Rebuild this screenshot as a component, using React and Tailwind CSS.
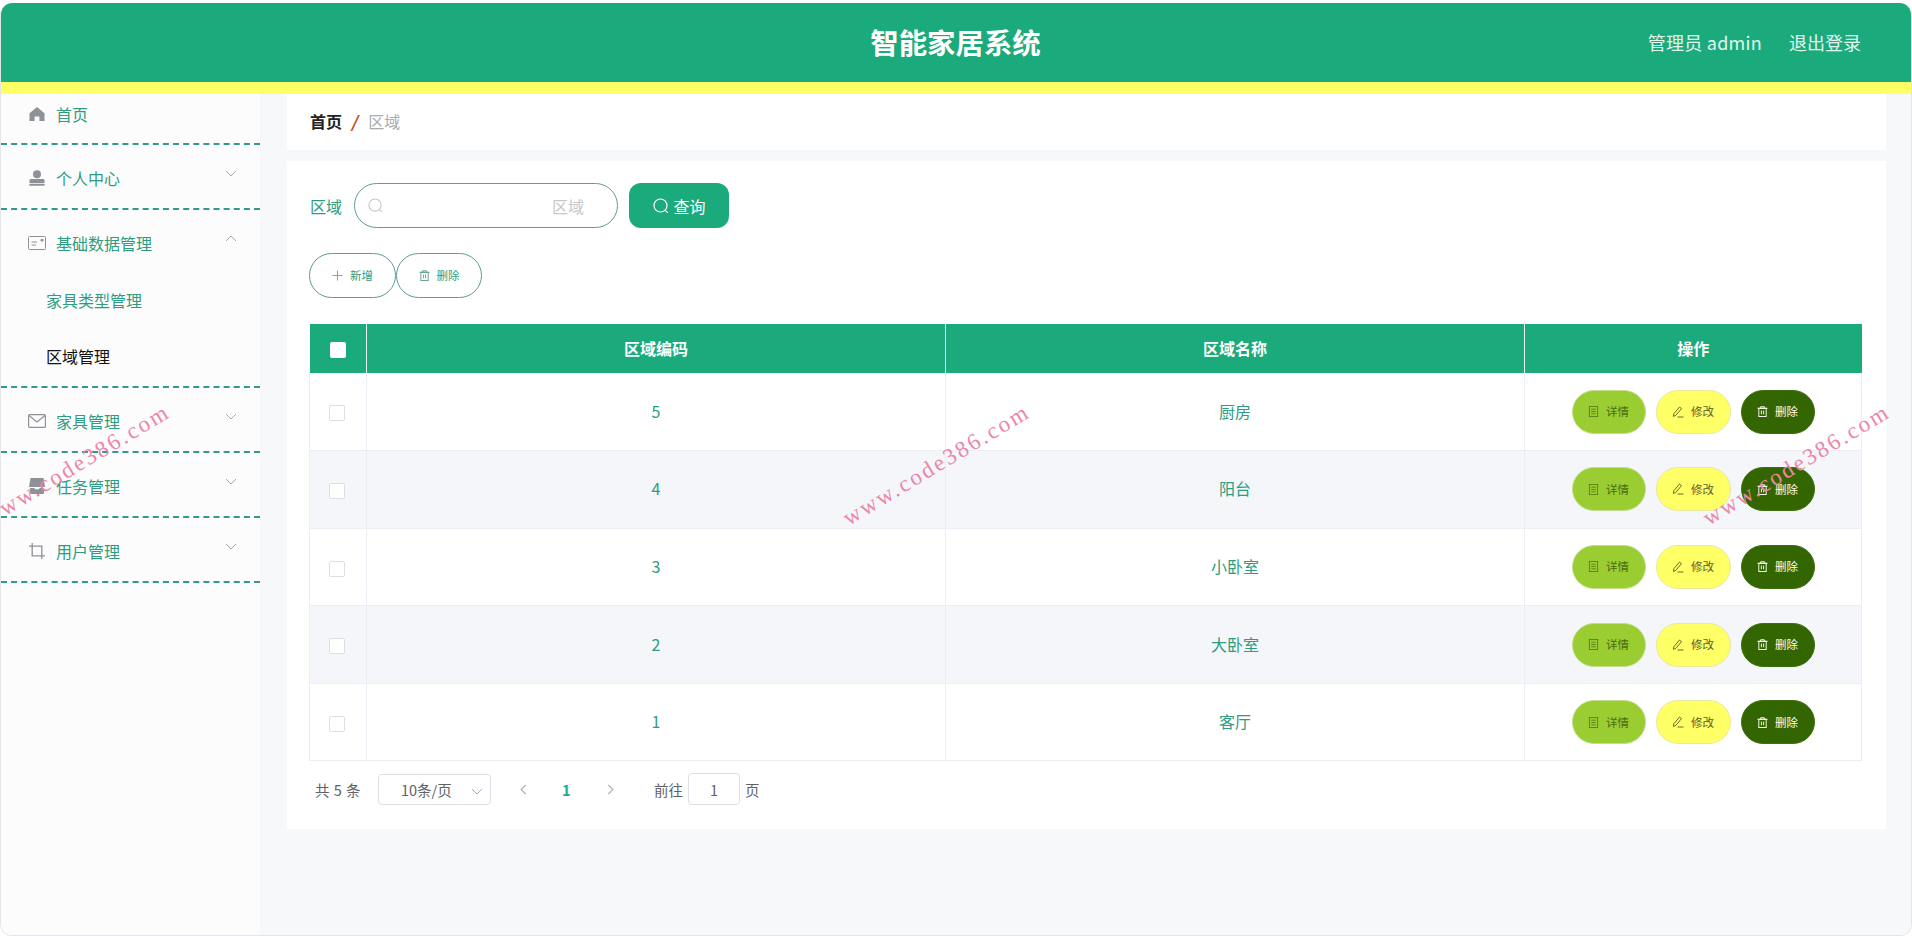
import React from "react";

const FONT = '"Noto Sans CJK SC", "Noto Sans", sans-serif';

const Home = () => (
  <svg viewBox="0 0 16 16" className="w-[16px] h-[16px]" fill="#8f9199">
    <path d="M8 1 L15.5 7.2 V15 H10.4 V10.4 H5.6 V15 H.5 V7.2 Z" />
  </svg>
);
const Person = () => (
  <svg viewBox="0 0 16 16" className="w-[16px] h-[16px]" fill="#8f9199">
    <circle cx="8" cy="4.2" r="4" />
    <path d="M.5 10.2 Q.5 9 2 9 H14 Q15.5 9 15.5 10.2 V13 H.5 Z" />
    <rect x=".5" y="13.8" width="15" height="2" rx=".4" />
  </svg>
);
const Postcard = () => (
  <svg viewBox="0 0 18 14" className="w-[18px] h-[14px]" fill="none" stroke="#8f9199" strokeWidth="1">
    <rect x=".5" y=".5" width="17" height="13" rx="1" />
    <path d="M3.5 6 H9 M3.5 9 H8" />
    <path d="M13 3.5 H15 V5 H13 Z" fill="#8f9199" />
  </svg>
);
const Message = () => (
  <svg viewBox="0 0 18 14" className="w-[18px] h-[14px]" fill="none" stroke="#8f9199" strokeWidth="1.2">
    <rect x=".6" y=".6" width="16.8" height="12.8" rx="1" />
    <path d="M1 1.5 L9 8 L17 1.5" />
  </svg>
);
const Box = () => (
  <svg viewBox="0 0 16 16" className="w-[16px] h-[16px]" fill="#8f9199">
    <path d="M1.5 0 H14.5 L16 9 H0 Z" />
    <path d="M1 10 H5 Q8 13 11 10 H15 V15 Q15 16 14 16 H2 Q1 16 1 15 Z" />
  </svg>
);
const Crop = () => (
  <svg viewBox="0 0 16 16" className="w-[16px] h-[16px]" fill="none" stroke="#8f9199" strokeWidth="1.3">
    <path d="M3.2 0 V12.8 H16" />
    <path d="M0 3.2 H12.8 V16" />
  </svg>
);
const Chev = ({ up }) => (
  <svg viewBox="0 0 12 7" className="w-[12px] h-[7px]" fill="none" stroke="#a9abb2" strokeWidth="1">
    <path d={up ? "M1 6 L6 1 L11 6" : "M1 1 L6 6 L11 1"} />
  </svg>
);
const Search = ({ color, size }) => (
  <svg viewBox="0 0 16 16" style={{ width: size, height: size }} fill="none" stroke={color} strokeWidth="1.2">
    <circle cx="7.5" cy="7.5" r="6.5" />
    <path d="M12.3 12.3 L14.8 14.8" />
  </svg>
);
const Plus = () => (
  <svg viewBox="0 0 12 12" className="w-[11px] h-[11px]" fill="none" stroke="#7e9c96" strokeWidth="1">
    <path d="M6 .5 V11.5 M.5 6 H11.5" />
  </svg>
);
const Trash = ({ color }) => (
  <svg viewBox="0 0 12 12" className="w-[11px] h-[11px]" fill="none" stroke={color} strokeWidth="1">
    <path d="M.5 2.5 H11.5 M4 2.5 V.8 H8 V2.5" />
    <rect x="2" y="2.5" width="8" height="9" />
    <path d="M4.8 5 V9 M7.2 5 V9" />
  </svg>
);
const Doc = ({ color }) => (
  <svg viewBox="0 0 12 12" className="w-[11px] h-[11px]" fill="none" stroke={color} strokeWidth="1">
    <rect x="1.5" y=".5" width="9" height="11" />
    <path d="M3.5 3.5 H8.5 M3.5 6 H8.5 M3.5 8.5 H8.5" />
  </svg>
);
const Pen = ({ color }) => (
  <svg viewBox="0 0 12 12" className="w-[12px] h-[12px]" fill="none" stroke={color} strokeWidth="1">
    <path d="M7.5 1 L9.5 2.6 L3.8 9.4 L1.4 10.4 L1.8 7.8 Z" />
    <path d="M5.5 11 H11.5" />
  </svg>
);

const menu = [
  { label: "个人中心", icon: <Person /> },
  { label: "基础数据管理", icon: <Postcard />, open: true },
  { label: "家具管理", icon: <Message /> },
  { label: "任务管理", icon: <Box /> },
  { label: "用户管理", icon: <Crop /> },
];

const MenuRow = ({ item }) => (
  <div className="h-[63px] flex items-center pl-[27px] pr-[23px] pt-[2px]">
    <span className="w-[18px] flex justify-center">{item.icon}</span>
    <span className="ml-[10px] text-[16px] text-[#2d9c80]">{item.label}</span>
    <span className="ml-auto -mt-[8px] flex"><Chev up={item.open} /></span>
  </div>
);

const Sidebar = () => (
  <aside className="w-[259px] shrink-0 bg-[#fcfcfd]">
    <div className="h-[51px] flex items-center pl-[27px] pb-[9px] border-b-2 border-dashed border-[#33998a]">
      <span className="w-[18px] flex justify-center"><Home /></span>
      <span className="ml-[10px] text-[16px] text-[#2d9c80]">首页</span>
    </div>
    {menu.map((item) => (
      <div key={item.label} className="border-b-2 border-dashed border-[#33998a]">
        <MenuRow item={item} />
        {item.open && (
          <div>
            <div className="h-[54px] flex items-center pl-[45px] text-[16px] text-[#2d9c80]">家具类型管理</div>
            <div className="h-[59px] flex items-center pl-[45px] pb-[2px] text-[16px] text-[#111111]">区域管理</div>
          </div>
        )}
      </div>
    ))}
  </aside>
);

const ActionBtn = ({ w, bg, border, color, icon, label }) => (
  <button className={`h-[44px] ${w} rounded-full flex items-center justify-center gap-[7px] text-[11.5px] border ${bg} ${border} ${color}`}>
    {icon}
    {label}
  </button>
);

const rows = [
  ["5", "厨房"],
  ["4", "阳台"],
  ["3", "小卧室"],
  ["2", "大卧室"],
  ["1", "客厅"],
];

const Table = () => (
  <table className="w-[1552px] table-fixed border-collapse mt-[26px]">
    <colgroup>
      <col className="w-[57px]" />
      <col className="w-[579px]" />
      <col className="w-[579px]" />
      <col className="w-[337px]" />
    </colgroup>
    <thead>
      <tr className="h-[49px] bg-[#1baa7b] text-white text-[16px] font-bold">
        <th className="border-r border-[#e8f5f0] pb-[2px]">
          <span className="inline-block w-[16px] h-[16px] bg-white rounded-[2px] align-middle" />
        </th>
        <th className="border-r border-[#e8f5f0] pb-[2px]">区域编码</th>
        <th className="border-r border-[#e8f5f0] pb-[2px]">区域名称</th>
        <th className="pb-[2px]">操作</th>
      </tr>
    </thead>
    <tbody>
      {rows.map((r, i) => (
        <tr key={r[0]} className={`h-[77.6px] text-[16px] text-[#2d9c80] border-b border-[#ebeef5] ${i % 2 ? "bg-[#f4f6fa]" : "bg-white"}`}>
          <td className="border-x border-[#ebeef5] text-center pb-[2px] pr-[3px]">
            <span className="inline-block w-[16px] h-[16px] bg-white border border-[#dcdfe6] rounded-[2px] align-middle" />
          </td>
          <td className="border-r border-[#ebeef5] text-center pb-[2px]">{r[0]}</td>
          <td className="border-r border-[#ebeef5] text-center pb-[2px]">{r[1]}</td>
          <td className="border-r border-[#ebeef5]">
            <div className="flex justify-center gap-[10px]">
              <ActionBtn w="w-[74px]" bg="bg-[#9acd32]" border="border-[#c3dd8c]" color="text-[#4d6b14]" icon={<Doc color="#5f7f1f" />} label="详情" />
              <ActionBtn w="w-[75px]" bg="bg-[#ffff66]" border="border-[#e8e8a0]" color="text-[#5c5c2e]" icon={<Pen color="#6b6b2a" />} label="修改" />
              <ActionBtn w="w-[74px]" bg="bg-[#336600]" border="border-[#3d7010]" color="text-white" icon={<Trash color="#ffffff" />} label="删除" />
            </div>
          </td>
        </tr>
      ))}
    </tbody>
  </table>
);

const Pager = () => (
  <div className="flex items-center h-[32px] mt-[12px] text-[14.5px] text-[#606266]">
    <span className="ml-[6px] w-[63px] tracking-[0.5px]">共 5 条</span>
    <div className="w-[113px] h-[31px] border border-[#dcdfe6] rounded-[4px] flex items-center relative pl-[22px]">
      <span>10条/页</span>
      <span className="absolute right-[7px] top-[13px] flex"><Chev /></span>
    </div>
    <svg viewBox="0 0 8 12" className="w-[8px] h-[11px] ml-[28px]" fill="none" stroke="#b8bac0" strokeWidth="1.6"><path d="M7 1 L2 6 L7 11" /></svg>
    <span className="ml-[35px] w-[8px] text-center font-bold text-[#1dab8d]">1</span>
    <svg viewBox="0 0 8 12" className="w-[8px] h-[11px] ml-[37px]" fill="none" stroke="#b8bac0" strokeWidth="1.6"><path d="M1 1 L6 6 L1 11" /></svg>
    <span className="ml-[39px]">前往</span>
    <div className="ml-[5px] w-[52px] h-[32px] border border-[#dcdfe6] rounded-[4px] flex items-center justify-center">1</div>
    <span className="ml-[5px]">页</span>
  </div>
);

const Main = () => (
  <main className="flex-1 min-w-0 bg-[#f6f8fa] pl-[27px] pr-[25px]">
    <div className="h-[56px] bg-white flex items-center px-[23px] pb-[2px] text-[16px]">
      <span className="font-bold text-[#222222]">首页</span>
      <span className="ml-[9px] mr-[11px] font-black italic text-[#c4572b]">/</span>
      <span className="text-[#a8abb2]">区域</span>
    </div>
    <div className="mt-[11px] h-[668px] bg-white pl-[22px] pt-[22px]">
      <div className="flex items-center h-[45px]">
        <span className="ml-[1px] text-[16px] text-[#2d9c80]">区域</span>
        <div className="ml-[12px] w-[264px] h-[45px] rounded-full border border-[#5e9c97] flex items-center pl-[13px]">
          <Search color="#c4c7cd" size={15} />
          <span className="ml-[169px] text-[16px] text-[#c6c8cd]">区域</span>
        </div>
        <button className="ml-[11px] w-[100px] h-[45px] rounded-[12px] bg-[#1baa7b] text-white text-[16px] flex items-center justify-center gap-[5px]">
          <Search color="#ffffff" size={16} />
          查询
        </button>
      </div>
      <div className="flex mt-[25px]">
        <button className="w-[87px] h-[45px] rounded-full border border-[#5e9c97] flex items-center justify-center gap-[7px] text-[11.5px] text-[#2d9c80]">
          <Plus />新增
        </button>
        <button className="w-[86px] h-[45px] rounded-full border border-[#5e9c97] flex items-center justify-center gap-[7px] text-[11.5px] text-[#2d9c80]">
          <Trash color="#5e9c8c" />删除
        </button>
      </div>
      <Table />
      <Pager />
    </div>
  </main>
);

const Watermark = ({ x }) => (
  <span
    className="absolute top-[448px] whitespace-nowrap text-[23px] tracking-[2.4px] text-[#ec86a8] -rotate-[31deg] pointer-events-none"
    style={{ left: x, fontFamily: '"Liberation Serif", serif' }}
  >
    www.code386.com
  </span>
);

export default function App() {
  return (
    <div className="relative w-[1912px] h-[936px] overflow-hidden bg-white pt-[3px]" style={{ fontFamily: FONT }}>
      <div className="h-full flex flex-col rounded-[12px] border-x border-b border-[#e3e5e8] overflow-hidden">
        <header className="h-[79px] shrink-0 bg-[#1baa7b] relative flex items-center justify-center">
          <h1 className="text-[28.4px] font-bold text-white -ml-[1px]">智能家居系统</h1>
          <div className="absolute right-[50px] top-0 h-full flex items-center gap-[27px] text-[18px] text-[#e0f7ee]">
            <span className="tracking-[0.27px]">管理员 admin</span>
            <span>退出登录</span>
          </div>
        </header>
        <div className="h-[12px] shrink-0 bg-[#ffff66]" />
        <div className="flex-1 min-h-0 flex">
          <Sidebar />
          <Main />
        </div>
      </div>
      <Watermark x={-30} />
      <Watermark x={830} />
      <Watermark x={1690} />
    </div>
  );
}
